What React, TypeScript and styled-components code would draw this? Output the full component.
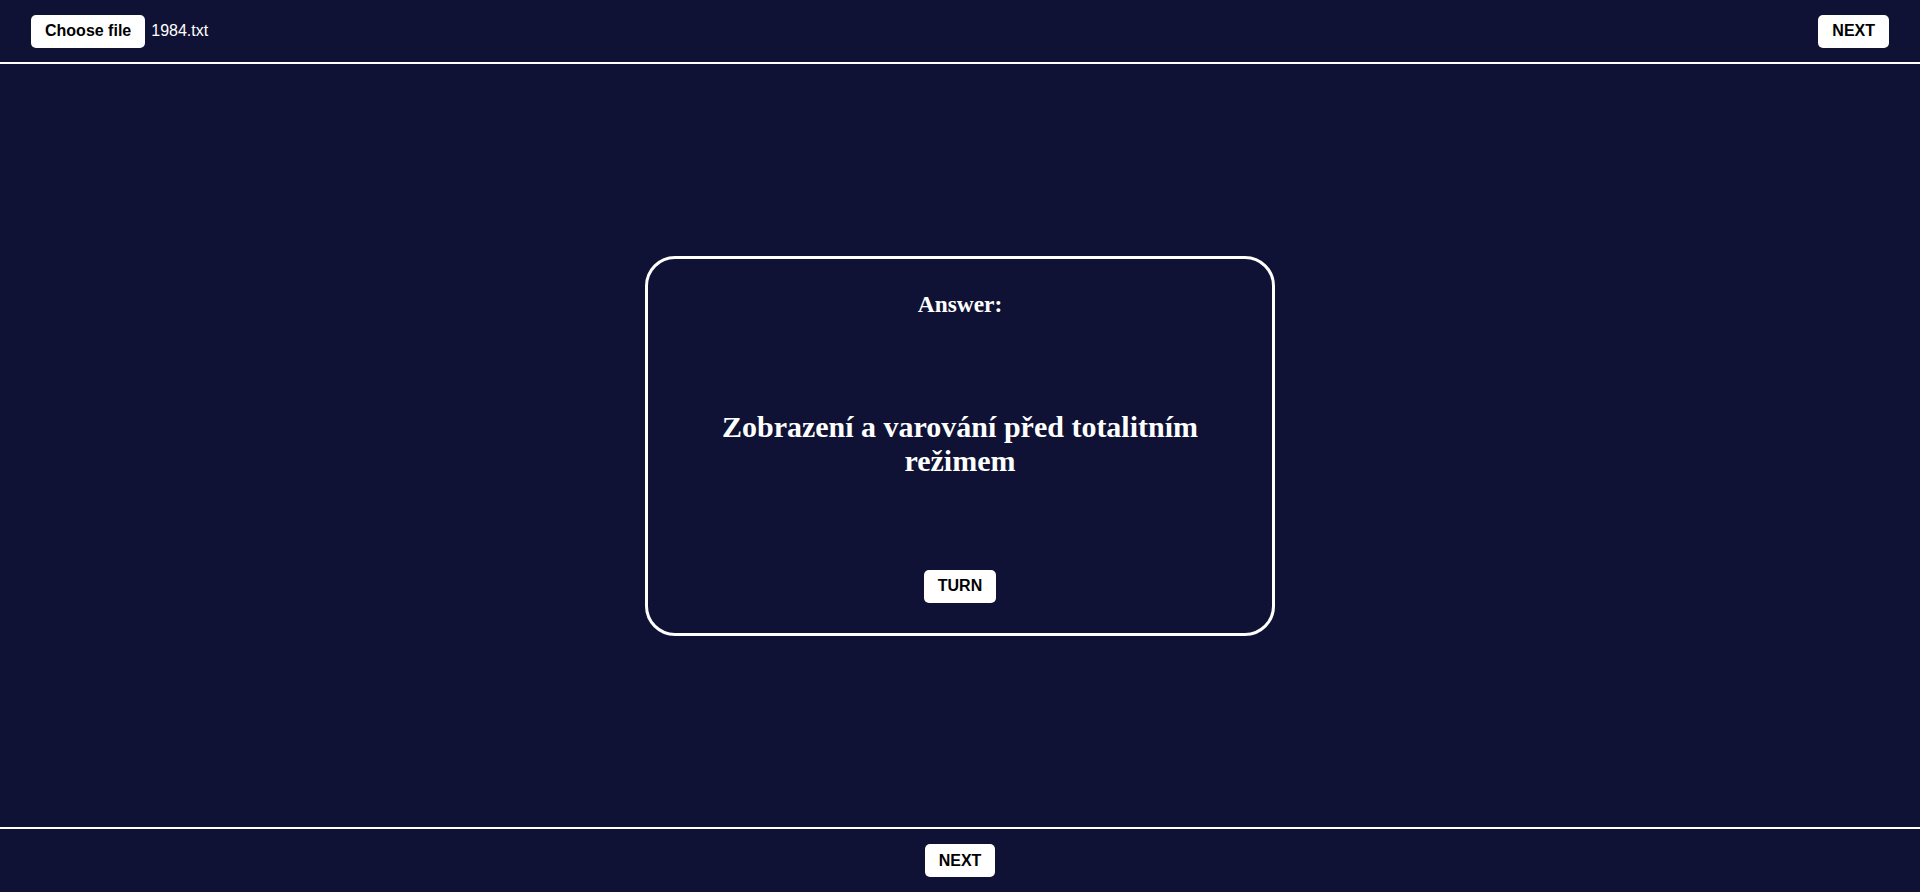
import React from "react";
import styled, { createGlobalStyle } from "styled-components";

const GlobalStyle = createGlobalStyle`
  html, body {
    margin: 0;
    padding: 0;
    background-color: #0f1234;
  }

  #root {
    min-height: 100vh;
  }
`;

const Page = styled.div`
  display: flex;
  flex-direction: column;
  height: 100vh;
  background-color: #0f1234;
  color: white;
  font-family: "Liberation Sans", Arial, sans-serif;
`;

const TopBar = styled.header`
  display: flex;
  align-items: center;
  justify-content: space-between;
  height: 62px;
  padding: 0 31px;
  border-bottom: 2px solid #ffffff;
  flex-shrink: 0;
`;

const FilePicker = styled.div`
  display: flex;
  align-items: center;
  gap: 6px;
`;

const FileName = styled.span`
  font-size: 16px;
  color: white;
`;

const Button = styled.button`
  height: 33px;
  padding: 0 14px;
  background-color: white;
  color: black;
  border: none;
  border-radius: 5px;
  font-family: "Liberation Sans", Arial, sans-serif;
  font-size: 16px;
  font-weight: bold;
  cursor: pointer;
`;

const Main = styled.main`
  flex: 1;
  display: flex;
  align-items: center;
  justify-content: center;
`;

const Card = styled.div`
  width: 630px;
  height: 380px;
  box-sizing: border-box;
  border: 3px solid white;
  border-radius: 30px;
  padding: 32px 30px 30px;
  display: flex;
  flex-direction: column;
  align-items: center;
  font-family: "Liberation Serif", "Times New Roman", serif;
`;

const Heading = styled.h3`
  margin: 0;
  font-size: 23.4px;
  font-weight: bold;
`;

const Body = styled.div`
  flex: 1;
  display: flex;
  align-items: center;
  justify-content: center;
`;

const Text = styled.h2`
  margin: 0;
  font-size: 30px;
  font-weight: bold;
  text-align: center;
  max-width: 560px;
`;

const BottomBar = styled.footer`
  display: flex;
  align-items: center;
  justify-content: center;
  height: 63px;
  border-top: 2px solid #ffffff;
  flex-shrink: 0;
`;

export default function App() {
  return (
    <>
      <GlobalStyle />
      <Page>
        <TopBar>
          <FilePicker>
            <Button>Choose file</Button>
            <FileName>1984.txt</FileName>
          </FilePicker>
          <Button>NEXT</Button>
        </TopBar>
        <Main>
          <Card>
            <Heading>Answer:</Heading>
            <Body>
              <Text>Zobrazení a varování před totalitním režimem</Text>
            </Body>
            <Button>TURN</Button>
          </Card>
        </Main>
        <BottomBar>
          <Button>NEXT</Button>
        </BottomBar>
      </Page>
    </>
  );
}
